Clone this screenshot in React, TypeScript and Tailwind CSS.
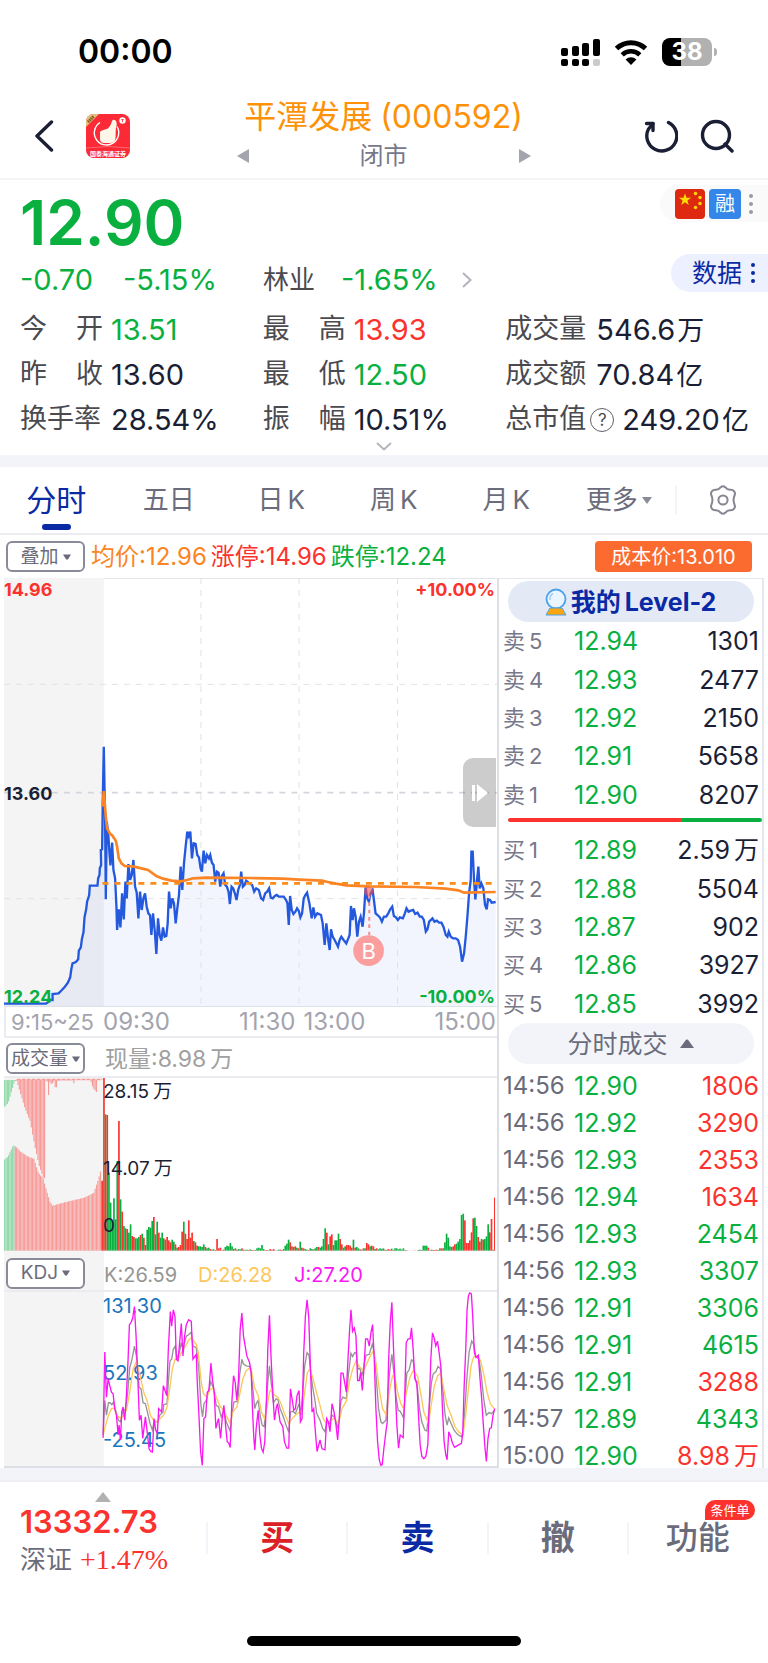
import { useState } from "react";

const tabs = ["分时", "五日", "日K", "周K", "月K", "更多"];

const stats = [
  { label: "今开", value: "13.51", color: "text-[#09b03f]" },
  { label: "最高", value: "13.93", color: "text-[#fb322d]" },
  { label: "成交量", value: "546.6万", color: "text-[#1b1f35]" },
  { label: "昨收", value: "13.60", color: "text-[#1b1f35]" },
  { label: "最低", value: "12.50", color: "text-[#09b03f]" },
  { label: "成交额", value: "70.84亿", color: "text-[#1b1f35]" },
  { label: "换手率", value: "28.54%", color: "text-[#1b1f35]" },
  { label: "振幅", value: "10.51%", color: "text-[#1b1f35]" },
  { label: "总市值", value: "249.20亿", color: "text-[#1b1f35]", help: true },
];

const sells = [
  ["卖5", "12.94", "1301"],
  ["卖4", "12.93", "2477"],
  ["卖3", "12.92", "2150"],
  ["卖2", "12.91", "5658"],
  ["卖1", "12.90", "8207"],
];

const buys = [
  ["买1", "12.89", "2.59万"],
  ["买2", "12.88", "5504"],
  ["买3", "12.87", "902"],
  ["买4", "12.86", "3927"],
  ["买5", "12.85", "3992"],
];

const ticks = [
  { time: "14:56", price: "12.90", volume: "1806", up: true },
  { time: "14:56", price: "12.92", volume: "3290", up: true },
  { time: "14:56", price: "12.93", volume: "2353", up: true },
  { time: "14:56", price: "12.94", volume: "1634", up: true },
  { time: "14:56", price: "12.93", volume: "2454", up: false },
  { time: "14:56", price: "12.93", volume: "3307", up: false },
  { time: "14:56", price: "12.91", volume: "3306", up: false },
  { time: "14:56", price: "12.91", volume: "4615", up: false },
  { time: "14:56", price: "12.91", volume: "3288", up: true },
  { time: "14:57", price: "12.89", volume: "4343", up: false },
  { time: "15:00", price: "12.90", volume: "8.98万", up: true },
];

const priceLine =
  "12,1301 138,1301 145,1296 152,1290 158,1290 158,1272 176,1270 186,1260 195,1250 204,1238 211,1222 214,1200 218,1180 228,1176 235,1168 237,1142 243,1132 246,1108 251,1086 254,1042 259,1018 262,994 268,976 270,947 293,947 295,925 299,915 300,895 304,885 303,840 307,838 309,690 312,530 316,760 318,988 321,755 326,800 329,850 332,886 337,818 341,900 346,925 350,1010 352,1080 357,1018 362,1072 367,970 372,1048 377,935 381,985 386,882 391,930 396,915 401,870 406,950 411,968 416,1045 421,965 426,1020 431,985 436,970 441,1010 446,1030 451,1036 455,1095 460,1030 465,1080 470,1152 475,1045 480,1095 485,1112 490,1072 495,1100 500,1098 504,1060 508,965 513,1015 518,985 523,1000 528,1060 533,1015 538,975 543,890 548,960 553,880 558,830 563,785 567,798 572,785 577,865 582,820 588,822 593,855 598,862 603,895 607,905 612,842 617,880 622,855 628,865 632,855 637,878 642,885 647,935 652,905 657,908 662,950 667,918 672,910 677,945 682,950 687,965 691,1002 696,950 701,955 706,970 711,990 716,960 721,945 725,905 730,950 735,945 740,932 750,940 758,945 764,965 770,955 778,960 785,985 791,990 797,970 803,965 809,955 814,983 820,985 826,978 832,975 838,980 853,980 860,990 864,1000 868,1065 872,978 877,1020 882,1032 888,1025 893,1015 898,1022 903,1042 908,1030 913,985 918,975 923,968 930,1000 937,1045 942,1012 947,1040 954,1030 965,1035 970,1060 976,1125 981,1060 986,1105 991,1140 995,1078 1000,1100 1006,1110 1011,1120 1016,1130 1021,1110 1026,1100 1033,1110 1041,1120 1047,1105 1051,1095 1055,1008 1060,1050 1064,1015 1069,1040 1074,1100 1079,1055 1084,1040 1090,1070 1094,1030 1099,952 1104,985 1109,995 1114,970 1120,960 1124,990 1129,1030 1135,1035 1142,1042 1148,1055 1154,1040 1161,1040 1167,1030 1173,1018 1179,1010 1184,1038 1190,1042 1196,1050 1202,1042 1211,1045 1217,1030 1222,1015 1228,1025 1235,1022 1242,1020 1248,1032 1255,1028 1262,1040 1268,1040 1274,1050 1280,1085 1285,1078 1290,1055 1300,1045 1306,1055 1313,1052 1320,1058 1327,1058 1333,1070 1340,1095 1345,1100 1349,1085 1355,1100 1362,1105 1370,1105 1377,1110 1383,1130 1389,1175 1395,1150 1400,1100 1405,1040 1410,970 1415,930 1417,845 1421,845 1425,930 1429,988 1434,930 1438,890 1442,955 1447,940 1453,955 1458,1005 1463,1018 1467,988 1473,990 1478,998 1490,996";

const averageLine =
  "308,710 312,663 318,740 322,775 330,790 338,797 348,812 352,830 357,865 365,880 375,888 400,889 425,895 445,900 470,918 490,926 515,932 545,934 562,930 580,925 620,923 750,924 850,926 900,929 968,932 985,936 1010,941 1040,946 1110,949 1250,951 1340,956 1378,961 1395,968 1490,966";

const kLine =
  "310,560 315,455 320,500 326,462 331,462 336,468 341,460 346,480 356,515 362,520 368,490 378,480 384,430 390,355 397,330 404,290 410,320 418,415 424,420 430,462 437,465 443,490 451,525 458,545 463,520 475,520 480,500 490,490 492,468 502,465 506,400 511,335 516,330 521,300 527,290 532,330 540,305 545,280 550,300 560,260 568,255 575,248 580,290 590,295 597,350 604,470 609,505 613,465 620,455 626,430 634,398 642,420 650,470 657,475 665,505 673,485 680,520 692,548 697,500 703,460 710,458 715,460 720,380 727,330 732,345 740,350 750,352 755,370 760,420 766,480 770,465 776,455 782,500 788,530 794,535 800,480 805,400 810,350 815,400 822,462 830,450 835,452 842,480 850,500 860,530 868,552 873,490 880,488 888,495 899,465 904,500 910,430 916,350 923,310 929,318 934,370 940,415 946,450 952,495 962,515 970,540 977,550 982,520 990,525 998,500 1006,505 1015,540 1020,510 1025,455 1031,445 1041,450 1047,380 1055,312 1060,322 1066,310 1071,312 1076,360 1082,358 1088,380 1094,350 1100,318 1110,315 1119,285 1125,310 1132,400 1138,480 1145,520 1150,525 1160,515 1165,450 1171,370 1178,315 1184,370 1190,440 1197,485 1203,488 1213,508 1218,440 1223,372 1230,362 1237,332 1242,335 1248,385 1255,420 1261,480 1268,520 1277,545 1283,548 1290,480 1297,400 1302,375 1310,368 1317,352 1325,360 1332,430 1338,500 1344,530 1349,508 1356,525 1365,545 1375,558 1387,565 1392,550 1398,470 1404,380 1410,310 1418,275 1424,285 1430,320 1440,330 1447,380 1454,450 1462,500 1470,492 1477,495 1487,485";

const dLine =
  "310,560 316,535 326,500 335,480 343,478 352,500 362,510 372,500 380,485 390,430 400,360 410,337 420,375 432,430 442,455 452,500 462,515 472,520 482,510 492,500 502,475 510,420 518,360 526,330 535,332 545,310 558,290 567,272 575,265 590,285 596,310 605,400 612,435 622,445 632,420 642,420 650,445 660,470 672,487 682,505 692,525 700,490 712,475 720,440 730,390 740,365 750,357 755,360 765,415 776,440 786,490 795,510 802,480 810,430 816,420 824,438 835,445 845,465 855,495 868,525 878,510 888,500 900,490 908,490 916,430 924,370 931,360 940,385 950,425 962,470 972,510 980,525 992,520 1004,508 1018,525 1028,480 1042,455 1050,400 1060,360 1070,335 1080,352 1092,365 1102,345 1112,322 1122,305 1130,340 1140,420 1150,480 1162,500 1170,430 1180,380 1186,380 1195,430 1205,465 1213,480 1222,430 1232,385 1242,365 1255,380 1264,430 1274,490 1288,525 1296,470 1306,410 1316,380 1325,372 1334,420 1344,470 1356,500 1368,535 1380,552 1392,558 1400,500 1408,420 1416,350 1424,322 1435,320 1445,335 1455,380 1464,430 1474,465 1487,482";

const jLine =
  "310,568 315,308 320,445 325,390 330,410 335,430 340,435 345,480 350,500 355,560 358,530 362,575 366,490 370,475 375,515 380,440 385,330 389,225 394,218 399,205 404,170 409,260 414,380 419,515 424,500 429,570 437,505 443,555 448,602 453,610 458,612 463,510 468,545 473,555 477,480 486,490 491,410 496,425 501,440 506,300 512,185 516,230 521,180 526,200 530,330 535,335 540,280 545,222 550,320 555,260 560,225 567,210 575,215 580,330 590,315 593,400 598,500 603,610 608,652 613,510 618,505 623,430 628,425 634,342 639,395 644,430 649,540 654,520 657,510 663,570 668,510 673,470 678,530 683,580 688,585 692,598 697,460 702,380 707,400 712,455 717,390 722,240 727,190 732,260 737,290 742,320 750,340 755,370 759,480 763,570 766,605 770,540 776,485 781,560 786,600 791,612 796,580 801,450 805,300 810,197 815,330 820,430 825,515 830,480 834,465 842,520 850,535 855,580 862,600 868,600 873,420 878,450 883,485 888,480 893,440 899,425 903,520 908,510 913,310 918,200 923,150 928,200 933,350 938,490 943,480 948,550 953,610 962,575 968,602 977,605 982,510 987,520 992,550 998,465 1004,490 1010,530 1015,575 1020,510 1025,372 1031,372 1036,400 1041,430 1046,330 1051,240 1055,180 1060,245 1065,235 1070,260 1075,395 1080,395 1084,370 1089,425 1094,360 1099,268 1105,268 1110,290 1115,250 1120,225 1125,330 1130,480 1135,580 1140,635 1145,652 1149,650 1154,600 1160,550 1164,520 1168,340 1173,220 1178,157 1183,300 1188,420 1193,530 1198,600 1203,560 1212,568 1217,430 1221,280 1227,268 1233,268 1237,235 1242,300 1247,390 1253,400 1258,500 1263,590 1268,625 1274,632 1280,625 1286,590 1291,450 1295,330 1300,250 1305,265 1310,290 1315,275 1320,310 1325,350 1330,480 1335,580 1340,620 1344,635 1349,550 1355,565 1360,585 1367,597 1375,592 1387,585 1391,555 1395,420 1400,300 1404,180 1408,138 1412,129 1417,132 1421,200 1426,310 1431,325 1438,318 1443,390 1448,450 1453,530 1458,600 1462,640 1467,570 1472,540 1477,538 1482,500 1487,480";

// one value per minute, negative = falling minute
const volumes = [
  520, -410, 408, -235, -145, -90, -158, -95, -270, 390, -155, 118, -75, -68, 66, -55, -80, 45, 42, -38,
  -38, -42, 48, -52, 40, 18, -64, -72, -70, -90, 102, -50, -88, 55, -40, -55, 38, -34, 42, 32,
  26, -34, -28, 20, -10, 12, 18, 58, -88, 52, 36, 92, 40, 55, -30, 26, 16, -14, -14, -12,
  -20, 12, -8, -10, 6, -4, -5, 3, 36, 8, 10, 2, 4, -12, -16, -14, -24, -14, 6, -8,
  4, -6, -5, 8, -4, 3, -4, 3, -5, 3, 2, -3, -8, -10, -8, -18, -6, 2, 3, -2,
  6, 3, 6, -1, 1, -4, 4, 3, -6, -16, -22, -34, 26, 14, -12, 14, -10, 8, -28, 10,
  8, -6, -4, 3, -8, -6, 5, -8, -12, 12, -10, -14, -36, -68, 55, -20, 44, 50, -18, -32,
  -32, -52, 36, 20, -10, -14, 18, 18, 16, 10, -34, 10, -12, -8, 5, -4, 8, -8, 24, 20,
  -14, 16, 14, -6, 8, -5, -8, -6, -8, 4, -3, 6, 4, -7, 3, -8, -8, -5, -7, -4,
  -8, -3, 2, 0, 0, 0, 0, 1, 0, -3, -4, 3, -16, -16, -16, 10, -2, 4, -3, 3,
  4, -3, 8, -8, 8, -26, -52, -40, -14, -12, 14, 20, -22, -28, -36, -108, -112, 92, 24, 24,
  32, 56, 98, -100, -75, 42, 28, -36, 34, -36, -44, -80, 56, 96, -4, 160,
];

const auctionBottom = [
  [12, 360], [24, 350], [40, 315], [50, 322], [62, 335], [85, 350], [102, 356], [115, 398], [130, 416],
  [140, 452], [150, 485], [158, 497], [190, 488], [250, 474], [270, 465], [282, 458], [295, 420], [306, 380],
];
const auctionTop = [
  [12, 202], [24, 190], [44, 124], [50, 122], [60, 155], [75, 205], [90, 242], [105, 320], [118, 378],
  [130, 413], [134, 415], [135, 121], [143, 125], [146, 165], [149, 124], [155, 134], [163, 122],
  [168, 155], [173, 122], [220, 121], [222, 130], [225, 121], [272, 121], [280, 145], [290, 156], [294, 121], [308, 121],
];

const interpolate = (points: number[][], x: number) => {
  for (let i = 1; i < points.length; i++) {
    const [x0, y0] = points[i - 1];
    const [x1, y1] = points[i];
    if (x <= x1) return y0 + ((y1 - y0) * (x - x0)) / (x1 - x0);
  }
  return points[points.length - 1][1];
};

const auctionXs = Array.from({ length: 73 }, (_, i) => 14 + i * 4);

const DropButton = ({ label }: { label: string }) => (
  <button className="flex h-[31px] w-[79px] shrink-0 items-center justify-center gap-1 rounded-md border-2 border-[#8a8b98] bg-white text-[19px] leading-6 text-[#6b6c7b]">
    {label}
    <svg viewBox="0 0 8 6" className="h-[6px] w-2 shrink-0" fill="#6b6c7b">
      <path d="M0 0.5h8L5 5.3Q4 6 3 5.3Z" />
    </svg>
  </button>
);

// splits the unit off so that it gets its own gap
const Amount = ({ value }: { value: string }) => {
  const unit = /[万亿]$/.test(value) ? value.slice(-1) : "";
  return (
    <>
      {unit ? value.slice(0, -1) : value}
      {unit && <span className="pl-1">{unit}</span>}
    </>
  );
};

const BookTable = ({ rows, label }: { rows: string[][]; label: string }) => (
  <table className="h-[192px] w-full table-fixed" aria-label={label}>
    <tbody>
      {rows.map(([name, price, volume]) => (
        <tr key={name} className="text-[25px] leading-8">
          <td className="w-[75px] pl-1 text-[22px] text-[#77788a]">
            {name[0]}
            <span className="pl-1">{name[1]}</span>
          </td>
          <td className="text-[#09b03f]">{price}</td>
          <td className="pr-[3px] text-right text-[#1b1f35]">
            <Amount value={volume} />
          </td>
        </tr>
      ))}
    </tbody>
  </table>
);

const StatusBar = () => (
  <div className="flex h-[92px] items-center justify-between pt-3 pr-[51px] pl-[78px]">
    <span className="text-[32px] leading-10 font-semibold text-black">00:00</span>
    <div className="flex items-center gap-[14px]">
      <svg viewBox="0 0 39 27" className="h-[27px] w-[39px]">
        <rect x="0" y="9" width="7" height="8" rx="2" />
        <rect x="11" y="7" width="7" height="10" rx="2" />
        <rect x="21" y="4" width="7" height="13" rx="2" />
        <rect x="32" y="0" width="7" height="17" rx="2" />
        <rect x="0" y="20" width="7" height="7" rx="2" />
        <rect x="11" y="20" width="7" height="7" rx="2" />
        <rect x="21" y="20" width="7" height="7" rx="2" />
        <rect x="32" y="20" width="7" height="7" rx="2" fill="#cbcbcb" />
      </svg>
      <svg viewBox="0 0 34 25" className="h-[25px] w-[34px]">
        <path d="M2.5 8.5a21 21 0 0 1 29 0" fill="none" stroke="#000" strokeWidth="5" />
        <path d="M8.2 14.8a12.8 12.8 0 0 1 17.6 0" fill="none" stroke="#000" strokeWidth="4.6" />
        <path d="M11.6 19.4a8 8 0 0 1 10.8 0L17 25Z" />
      </svg>
      <div className="flex items-center gap-[2px]">
        <div className="flex h-7 w-[50px] items-center justify-center rounded-lg bg-linear-to-r from-black from-38% to-[#b1b1b1] to-38% text-2xl leading-7 font-bold text-white">
          38
        </div>
        <div className="h-2 w-[3px] rounded-r-full bg-[#b1b1b1]" />
      </div>
    </div>
  </div>
);

const Header = () => (
  <header className="flex h-[88px] items-center border-b-2 border-[#f4f4f6] px-[34px] pt-[2px]">
    <button aria-label="返回">
      <svg viewBox="0 0 20 32" className="h-8 w-5" fill="none" stroke="#1b1f35" strokeWidth="3.4" strokeLinecap="round" strokeLinejoin="round">
        <path d="M17.5 2 3 16l14.5 14" />
      </svg>
    </button>
    <div className="relative ml-8 flex h-11 w-11 flex-col items-center justify-end overflow-hidden rounded-lg bg-[#fb2a36]">
      <svg viewBox="0 0 44 44" className="absolute inset-0 h-full w-full">
        <path d="M0 0h13L0 13Z" fill="#e3bf7c" />
        <path d="M2 8 8 2" stroke="#7a5320" strokeWidth="3" strokeDasharray="1.5 .6" />
        <path d="M14 8.5a12.2 12.2 0 1 0 17 4" fill="none" stroke="#fff" strokeWidth="1.4" />
        <path d="M14 18.5q0-1.5 2-1.9l6-2.1q3-2.5 4-7.5 1.5-2.5 4 0 1.5 2.5-.2 7.5l-.3 10q-.8 4.5-6 4.5h-5q-4.500 0-4.500-4Z" fill="#fff6ea" />
        <circle cx="36.5" cy="6.5" r="3.2" fill="#fff" />
        <path d="M35.3 5.5h2.4M36.5 5.5v2.7" stroke="#fb2a36" strokeWidth=".8" />
        <path d="M0 34q22-3 44 0" fill="none" stroke="#ff8086" strokeWidth=".7" />
      </svg>
      <span className="relative text-[6px] leading-[9px] font-bold whitespace-nowrap text-white">国泰海通证券</span>
    </div>
    <div className="flex flex-1 flex-col items-center pr-[7px]">
      <h1 className="text-[32px] leading-10 text-[#fd9208]">
        平潭发展<span className="pl-2">(000592)</span>
      </h1>
      <div className="flex h-[38px] w-[294px] items-center justify-between">
        <button aria-label="上一个">
          <svg viewBox="0 0 12 14" className="h-[14px] w-3" fill="#a3a4ae">
            <path d="M12 0v14L0 7Z" />
          </svg>
        </button>
        <span className="text-2xl leading-9 text-[#77788a]">闭市</span>
        <button aria-label="下一个">
          <svg viewBox="0 0 12 14" className="h-[14px] w-3" fill="#a3a4ae">
            <path d="M0 0v14l12-7Z" />
          </svg>
        </button>
      </div>
    </div>
    <div className="flex gap-[22px]">
      <button aria-label="刷新">
        <svg viewBox="0 0 34 34" className="h-[34px] w-[34px]" fill="none" stroke="#1b1f35" strokeWidth="3.4" strokeLinecap="round" strokeLinejoin="round">
          <path d="M24.5 3.5A15 15 0 1 1 4.5 10L9 4.5" />
          <path d="M2.5 4.5H9V11.5" />
        </svg>
      </button>
      <button aria-label="搜索">
        <svg viewBox="0 0 34 34" className="h-[34px] w-[34px]" fill="none" stroke="#1b1f35" strokeWidth="3.4" strokeLinecap="round">
          <circle cx="16" cy="16" r="13.5" />
          <path d="m25 25 7 7" />
        </svg>
      </button>
    </div>
  </header>
);

const Dots = ({ color }: { color: string }) => (
  <span className="flex flex-col gap-1">
    <i className={`h-1 w-1 rounded-full ${color}`} />
    <i className={`h-1 w-1 rounded-full ${color}`} />
    <i className={`h-1 w-1 rounded-full ${color}`} />
  </span>
);

const Quote = () => (
  <section className="text-[29px]">
    <div className="flex h-[118px] justify-between">
      <div className="pt-3 pl-5">
        <p className="text-[62px] leading-[62px] font-semibold text-[#09b03f]">12.90</p>
        <div className="mt-2 flex items-center leading-9 text-[#09b03f]">
          <span className="w-[103px]">-0.70</span>
          <span className="w-[140px]">-5.15%</span>
          <a href="#sector" className="flex items-center">
            <span className="w-[78px] text-[26px] text-[#4a4a4f]">林业</span>
            -1.65%
            <svg viewBox="0 0 10 16" className="ml-6 h-4 w-[10px]" fill="none" stroke="#b4b4bc" strokeWidth="2">
              <path d="m1 1 7.5 7L1 15" />
            </svg>
          </a>
        </div>
      </div>
      <div className="flex flex-col items-end gap-8 pt-[5px]">
        <div className="flex h-[37px] w-[108px] items-center gap-1 rounded-l-full bg-[#fafafa] pl-[15px]">
          <svg viewBox="0 0 30 30" className="h-[30px] w-[30px]">
            <rect width="30" height="30" rx="4" fill="#de2910" />
            <g fill="#ffde00">
              <path d="m10 4.5 1.5 4.3h4.5l-3.6 2.7 1.3 4.4-3.7-2.6-3.7 2.6 1.3-4.4L4 8.8h4.5Z" />
              <circle cx="20.5" cy="4.5" r="1.7" />
              <circle cx="25" cy="8.5" r="1.7" />
              <circle cx="25" cy="14.5" r="1.7" />
              <circle cx="20.5" cy="18.5" r="1.7" />
            </g>
          </svg>
          <span className="mr-1 flex h-[30px] w-8 items-center justify-center rounded bg-[#3487e8] text-xl leading-7 text-white">融</span>
          <Dots color="bg-[#9a9aa4]" />
        </div>
        <button className="flex h-[38px] w-[97px] items-center gap-[9px] rounded-l-full bg-[#edf0fe] pl-[21px] text-[25px] leading-8 text-[#0a2aa5]">
          数据
          <Dots color="bg-[#0a2aa5]" />
        </button>
      </div>
    </div>
    <dl className="mt-[9px] grid grid-cols-3 px-5">
      {stats.map((stat) => (
        <div key={stat.label} className="flex h-[45px] items-center whitespace-nowrap">
          <dt className="flex w-[83px] shrink-0 justify-between text-[27px] text-[#4a4a4f]">
            {stat.label.length === 2 ? stat.label.split("").map((char) => <span key={char}>{char}</span>) : stat.label}
          </dt>
          {stat.help && (
            <button aria-label="说明" className="ml-[2px] flex h-6 w-6 shrink-0 items-center justify-center rounded-full border border-[#5f5f68] text-[17px] leading-5 text-[#4a4a4f]">
              ?
            </button>
          )}
          <dd className={`pl-2 ${stat.color}`}>
            {stat.value.replace(/[万亿]/, "")}
            {/[万亿]/.test(stat.value) && <span className="pl-[2px] text-[27px]">{stat.value.slice(-1)}</span>}
          </dd>
        </div>
      ))}
    </dl>
    <button aria-label="展开" className="mx-auto flex h-[13px] items-start">
      <svg viewBox="0 0 16 9" className="h-[9px] w-4" fill="none" stroke="#b4b4bc" strokeWidth="2">
        <path d="m1 1 7 6.5L15 1" />
      </svg>
    </button>
  </section>
);

const PriceChart = () => (
  <div className="relative h-[429px]">
    <svg viewBox="12 24 1482 1287" preserveAspectRatio="none" className="h-full w-full">
      <rect x="12" y="24" width="300" height="1290" fill="#f4f4f4" />
      <polygon points={`${priceLine} 1490,1311 12,1311`} fill="#2a5be0" fillOpacity="0.06" />
      <g stroke="#e2e2e6" strokeWidth="3" strokeDasharray="18 18" fill="none">
        <path d="M12 343H1494M12 986H1494M604 24V1311M899 24V1311M1195 24V1311" />
        <path d="M12 668H1494" stroke="#d3d6dc" strokeWidth="5" />
      </g>
      <path d="M312 25H1494M12 1310H1494" stroke="#dcdfe4" strokeWidth="3" />
      <polyline points={priceLine} fill="none" stroke="#2459de" strokeWidth="7" />
      <path d="M308 940H1490" stroke="#fb8c18" strokeWidth="8" strokeDasharray="18 18" />
      <polyline points={averageLine} fill="none" stroke="#fb8424" strokeWidth="8" />
      <path d="M1110 975V1100" stroke="#f98c8c" strokeWidth="6" strokeDasharray="11 11" />
      <circle cx="1108" cy="964" r="14" fill="#f4504f" fillOpacity="0.6" />
      <circle cx="1108" cy="1142" r="46" fill="#fb9f9e" />
    </svg>
    <div className="absolute inset-0 flex flex-col justify-between pt-[2px] text-[18px] leading-5 font-bold">
      <p className="flex justify-between text-[#fb322d]">
        <span>14.96</span>
        <span className="pr-[2px]">+10.00%</span>
      </p>
      <p className="text-[#1b1f35]">13.60</p>
      <p className="flex justify-between text-[#09b03f]">
        <span>12.24</span>
        <span className="pr-[2px]">-10.00%</span>
      </p>
    </div>
    <span className="absolute top-[357px] left-[74%] -translate-x-1/2 text-[22px] leading-8 text-white">B</span>
    <button aria-label="收起" className="absolute top-[180px] right-px flex h-[69px] w-[33px] items-center justify-center rounded-l-[10px] bg-black/20">
      <svg viewBox="0 0 16 18" className="h-[18px] w-4" fill="#fff">
        <path d="M0 1h3v16H0ZM5 0l11 9L5 18Z" />
      </svg>
    </button>
  </div>
);

const VolumeChart = () => (
  <div className="relative h-[173px]">
    <svg viewBox="12 114 1482 519" preserveAspectRatio="none" className="h-full w-full">
      <rect x="12" y="114" width="300" height="519" fill="#f4f4f4" />
      {auctionXs.map((x) => {
        const green = x < 45 || x === 270;
        return (
          <path
            key={x}
            d={`M${x} 120V${interpolate(auctionTop, x)}M${x} 633V${interpolate(auctionBottom, x)}`}
            stroke={green ? "#8ed8a6" : "#f79b99"}
            strokeWidth="3.4"
          />
        );
      })}
      <path d="M50 118H308" stroke="#f79b99" strokeWidth="4" strokeDasharray="12 3" />
      <path d="M307 633V422" stroke="#fb322d" strokeWidth="5" />
      {volumes.map((volume, i) => (
        <rect
          key={i}
          x={310 + i * 5}
          y={633 - Math.abs(volume)}
          width={i === 235 ? 3 : 5}
          height={Math.abs(volume)}
          fill={volume > 0 ? "#fb322d" : "#09b03f"}
        />
      ))}
      <path d="M12 631H1494" stroke="#e2e2e6" strokeOpacity="0.5" strokeWidth="3" />
    </svg>
    <div className="absolute top-0 left-[99px] flex flex-col text-[19px] leading-7 text-[#1b1f35]">
      <span className="h-[77px]">
        <Amount value="28.15万" />
      </span>
      <span className="h-[57px]">
        <Amount value="14.07万" />
      </span>
      <span>0</span>
    </div>
  </div>
);

const KdjChart = () => (
  <div className="relative h-[176px] border-b-2 border-[#dcdfe4]">
    <svg viewBox="12 126 1482 528" preserveAspectRatio="none" className="h-full w-full">
      <rect x="12" y="126" width="300" height="528" fill="#f4f4f4" />
    </svg>
    <div className="absolute inset-y-0 left-[99px] flex flex-col justify-between pb-3 text-[20px] leading-7 text-[#1a75bd]">
      <span>131.30</span>
      <span>52.93</span>
      <span>-25.45</span>
    </div>
    <svg viewBox="12 126 1482 528" preserveAspectRatio="none" className="absolute inset-0 h-full w-full" fill="none" strokeWidth="4">
      <polyline points={kLine} stroke="#959595" />
      <polyline points={dLine} stroke="#fdc75a" />
      <polyline points={jLine} stroke="#fb16f4" />
    </svg>
  </div>
);

const Charts = () => (
  <div className="ml-1 flex-1 border-r-2 border-[#dcdfe4]">
    <PriceChart />
    <div className="flex h-[31px] items-center border-b-2 border-l-2 border-[#ececf0] text-[24px] leading-7 text-[#a3a4ae]">
      <span className="w-[97px] pr-1 text-center text-[22px]">9:15~25</span>
      <span>09:30</span>
      <span className="ml-auto">11:30</span>
      <span className="ml-2">13:00</span>
      <span className="mr-px ml-auto">15:00</span>
    </div>
    <div className="flex h-10 items-center border-b-2 border-[#ececf0] pt-[3px] pl-[2px] text-[23px] leading-7 text-[#a0a0a0]">
      <DropButton label="成交量" />
      <span className="pl-5">
        现量:
        <Amount value="8.98万" />
      </span>
    </div>
    <VolumeChart />
    <div className="flex h-[41px] items-center border-b-2 border-[#ececf0] text-[20px] leading-7">
      <div className="flex h-full w-[100px] items-center bg-[#f4f4f4] pt-[5px] pl-[2px]">
        <DropButton label="KDJ" />
      </div>
      <span className="w-[94px] pt-[9px] text-[#959595]">K:26.59</span>
      <span className="w-[96px] pt-[9px] text-[#fdc75a]">D:26.28</span>
      <span className="pt-[9px] text-[#fb16f4]">J:27.20</span>
    </div>
    <KdjChart />
  </div>
);

const OrderBook = () => (
  <div className="mr-1 w-[265px] shrink-0 border-t border-r-2 border-[#e6e6ee] pt-[2px]">
    <button className="mx-auto flex h-[41px] w-[246px] items-center justify-center gap-1 rounded-full bg-[#e4e9f6] text-[25px] leading-8 font-bold text-[#0a2aa5]">
      <svg viewBox="0 0 22 28" className="h-7 w-[22px]">
        <circle cx="11" cy="11" r="9.5" fill="#eaf5ff" stroke="#4ba3ea" strokeWidth="1.8" />
        <path d="M5 12a6.5 6.5 0 0 1 3-6.5" fill="none" stroke="#8cc6f4" strokeWidth="1.2" />
        <path d="M5 20h12l4 7H1Z" fill="#fba50e" stroke="#4ba3ea" strokeWidth="1" />
      </svg>
      <span>
        我的<span className="pl-1">Level-2</span>
      </span>
    </button>
    <BookTable rows={sells} label="卖盘" />
    <div className="flex h-[17px] items-start pt-1 pl-[9px]">
      <div className="h-1 w-[68%] rounded-l-full bg-[#fb322d]" />
      <div className="h-1 flex-1 rounded-r-full bg-[#09b03f]" />
    </div>
    <BookTable rows={buys} label="买盘" />
    <button className="mx-auto flex h-[41px] w-[246px] items-center justify-center gap-3 rounded-full bg-[#f3f4f9] text-[25px] leading-8 text-[#6b6c7b]">
      分时成交
      <svg viewBox="0 0 14 9" className="h-[9px] w-[14px]" fill="#6b6c7b">
        <path d="M0 9h14L8 .8Q7 0 6 .8Z" />
      </svg>
    </button>
    <table className="mt-[3px] h-[407px] w-full table-fixed" aria-label="分时成交">
      <tbody>
        {ticks.map((tick, i) => (
          <tr key={i} className="text-[25px] leading-5">
            <td className="w-[75px] pl-1 text-[24px] text-[#6b6c7b]">{tick.time}</td>
            <td className="text-[#09b03f]">{tick.price}</td>
            <td className={`pr-[3px] text-right ${tick.up ? "text-[#fb322d]" : "text-[#09b03f]"}`}>
              <Amount value={tick.volume} />
            </td>
          </tr>
        ))}
      </tbody>
    </table>
  </div>
);

const Footer = () => (
  <footer>
    <div className="h-[14px] border-b-2 border-[#efeff4] bg-[#f3f4f9]" />
    <div className="flex h-[112px]">
      <a href="#index" className="w-[206px] pt-[10px] pl-5 text-[#fb322d]">
        <svg viewBox="0 0 16 10" className="ml-[75px] h-[10px] w-4" fill="#b1b1b1">
          <path d="M8 0 16 10H0Z" />
        </svg>
        <p className="text-[31px] leading-10 font-semibold">13332.73</p>
        <p className="text-[26px] leading-9 text-[#6b6c7b]">
          深证
          <span className="pl-2 font-['Liberation_Serif',serif] text-[28px] text-[#fb322d]">+1.47%</span>
        </p>
      </a>
      <nav className="grid flex-1 grid-cols-4 items-center pr-px text-[34px] leading-10 font-bold text-[#6b6c7b]">
        <button className="h-8 border-l-2 border-[#f3f4f9] leading-8 text-[#dc2028]">买</button>
        <button className="h-8 border-l-2 border-[#f3f4f9] leading-8 text-[#0a2aa5]">卖</button>
        <button className="h-8 border-l-2 border-[#f3f4f9] leading-8">撤</button>
        <button className="relative h-8 border-l-2 border-[#f3f4f9] text-[32px] leading-8 font-medium">
          功能
          <span className="absolute -top-[22px] right-3 flex h-5 w-[50px] items-center justify-center rounded-[10px] rounded-bl-none bg-[#fb322d] text-[13px] leading-5 font-normal text-white">
            条件单
          </span>
        </button>
      </nav>
    </div>
    <div className="flex justify-center pt-[42px] pb-[17px]">
      <div className="h-[10px] w-[274px] rounded-full bg-black" />
    </div>
  </footer>
);

export default function App() {
  const [active, setActive] = useState("分时");
  return (
    <main className="w-full overflow-hidden bg-white font-['Inter','Noto_Sans_CJK_SC',sans-serif]">
      <StatusBar />
      <Header />
      <Quote />
      <div className="h-3 bg-[#f3f4f9]" />
      <div className="flex h-[68px] items-center border-b-2 border-[#ececf0]">
        <nav className="grid h-full flex-1 grid-cols-6">
          {tabs.map((tab) => (
            <button
              key={tab}
              onClick={() => setActive(tab)}
              className={`relative flex items-center justify-center gap-1 leading-10 ${
                active === tab ? "text-[30px] text-[#0a2aa5]" : "text-[26px] text-[#6b6c7b]"
              }`}
            >
              <span>
                {tab[0]}
                <span className={tab[1] === "K" ? "pl-1" : ""}>{tab[1]}</span>
              </span>
              {tab === "更多" && (
                <svg viewBox="0 0 10 7" className="h-[7px] w-[10px]" fill="#8a8b98">
                  <path d="M0 0h10L5 7Z" />
                </svg>
              )}
              {active === tab && <span className="absolute bottom-[3px] h-[6px] w-[29px] rounded-full bg-[#0a2aa5]" />}
            </button>
          ))}
        </nav>
        <button aria-label="设置" className="flex h-7 w-[93px] items-center justify-center border-l-2 border-[#f3f4f9]">
          <svg viewBox="0 0 30 30" className="h-[30px] w-[30px]" fill="none" stroke="#85868f" strokeWidth="2">
            <path d="M12.8 2.2Q15 .2 17.2 2.2Q19.3 5 22.4 4.8C25.5 4.6 28 7.5 26.5 10.5Q24.6 15 26.5 19.5C28 22.5 25.5 25.4 22.4 25.2Q19.3 25 17.2 27.8Q15 29.8 12.8 27.8Q10.7 25 7.6 25.2C4.5 25.4 2 22.5 3.5 19.5Q5.4 15 3.5 10.5C2 7.5 4.5 4.6 7.6 4.8Q10.7 5 12.8 2.2Z" />
            <circle cx="15" cy="15" r="4.6" />
          </svg>
        </button>
      </div>
      <div className="flex h-[43px] items-center pr-4 pl-[6px] text-[24px] leading-8">
        <DropButton label="叠加" />
        <span className="pl-[6px] text-[#fb8424]">均价:12.96</span>
        <span className="pl-1 text-[#fb322d]">涨停:14.96</span>
        <span className="pl-1 text-[#09b03f]">跌停:12.24</span>
        <span className="ml-auto flex h-[31px] w-[157px] items-center justify-center rounded bg-[#fb6a2f] text-[20px] text-white">
          成本价:13.010
        </span>
      </div>
      <div className="flex h-[890px] overflow-hidden">
        <Charts />
        <OrderBook />
      </div>
      <Footer />
    </main>
  );
}
